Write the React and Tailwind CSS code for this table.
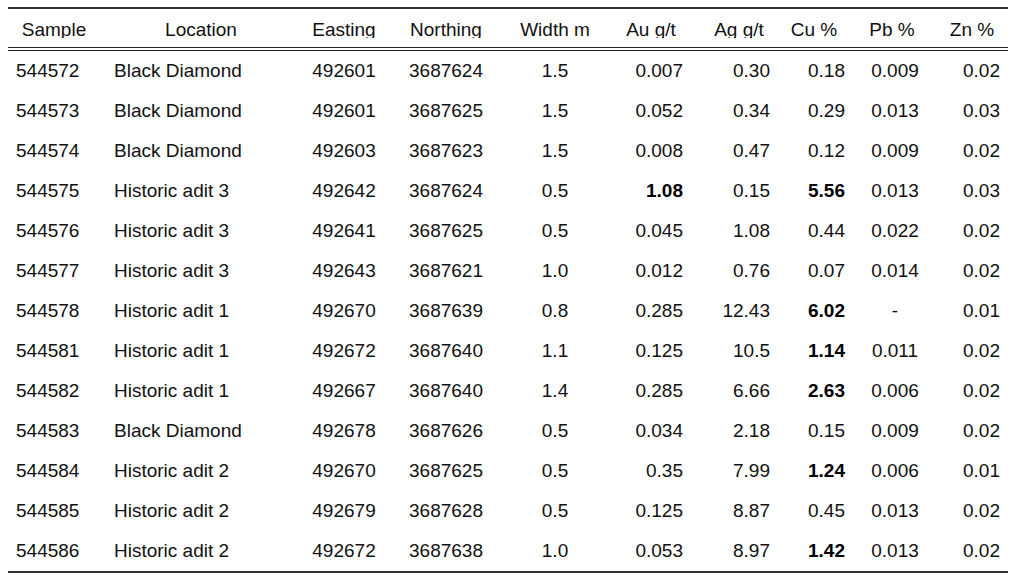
import React from "react";

const rows = [
  ["544572", "Black Diamond", "492601", "3687624", "1.5", "0.007", "0.30", "0.18", "0.009", "0.02"],
  ["544573", "Black Diamond", "492601", "3687625", "1.5", "0.052", "0.34", "0.29", "0.013", "0.03"],
  ["544574", "Black Diamond", "492603", "3687623", "1.5", "0.008", "0.47", "0.12", "0.009", "0.02"],
  ["544575", "Historic adit 3", "492642", "3687624", "0.5", "*1.08", "0.15", "*5.56", "0.013", "0.03"],
  ["544576", "Historic adit 3", "492641", "3687625", "0.5", "0.045", "1.08", "0.44", "0.022", "0.02"],
  ["544577", "Historic adit 3", "492643", "3687621", "1.0", "0.012", "0.76", "0.07", "0.014", "0.02"],
  ["544578", "Historic adit 1", "492670", "3687639", "0.8", "0.285", "12.43", "*6.02", "-", "0.01"],
  ["544581", "Historic adit 1", "492672", "3687640", "1.1", "0.125", "10.5", "*1.14", "0.011", "0.02"],
  ["544582", "Historic adit 1", "492667", "3687640", "1.4", "0.285", "6.66", "*2.63", "0.006", "0.02"],
  ["544583", "Black Diamond", "492678", "3687626", "0.5", "0.034", "2.18", "0.15", "0.009", "0.02"],
  ["544584", "Historic adit 2", "492670", "3687625", "0.5", "0.35", "7.99", "*1.24", "0.006", "0.01"],
  ["544585", "Historic adit 2", "492679", "3687628", "0.5", "0.125", "8.87", "0.45", "0.013", "0.02"],
  ["544586", "Historic adit 2", "492672", "3687638", "1.0", "0.053", "8.97", "*1.42", "0.013", "0.02"],
];

const headers = ["Sample", "Location", "Easting", "Northing", "Width m", "Au g/t", "Ag g/t", "Cu %", "Pb %", "Zn %"];

const cellAlign = [
  "justify-start pl-[8px]",
  "justify-start pl-[14px]",
  "justify-center",
  "justify-center",
  "justify-center",
  "justify-end pr-[15px]",
  "justify-end pr-[10px]",
  "justify-end pr-[3px]",
  "justify-center pl-[6px]",
  "justify-end pr-[8px]",
];

const gridCols = "grid grid-cols-[92px_202px_84px_120px_98px_94px_82px_68px_88px_72px]";

export default function App() {
  return (
    <div
      className="w-[1024px] h-[582px] bg-white text-[#111] overflow-hidden"
      style={{ fontFamily: '"Liberation Sans", Arial, sans-serif' }}
    >
      <div className="ml-[8px] w-[1000px] pt-[7px]">
        <div className="h-[2px] bg-[#333]" />
        <div className={`${gridCols} h-[38px] text-[19px]`}>
          {headers.map((h) => (
            <div key={h} className="flex items-center justify-center pt-[1px]">
              <span className="block h-[18px] leading-[20px] overflow-hidden whitespace-nowrap">{h}</span>
            </div>
          ))}
        </div>
        <div className="h-[1px] bg-[#222]" />
        <div className="h-[2px]" />
        <div className="h-[1px] bg-[#222]" />
        {rows.map((r) => (
          <div key={r[0]} className={`${gridCols} h-[40px] text-[19px] leading-[22px]`}>
            {r.map((v, i) => {
              const bold = v.startsWith("*");
              const text = bold ? v.slice(1) : v;
              return (
                <div key={i} className={`flex items-center whitespace-nowrap ${cellAlign[i]}`}>
                  <span className={bold ? "font-bold text-black" : ""}>{text}</span>
                </div>
              );
            })}
          </div>
        ))}
        <div className="h-[2px] bg-[#333]" />
      </div>
    </div>
  );
}
